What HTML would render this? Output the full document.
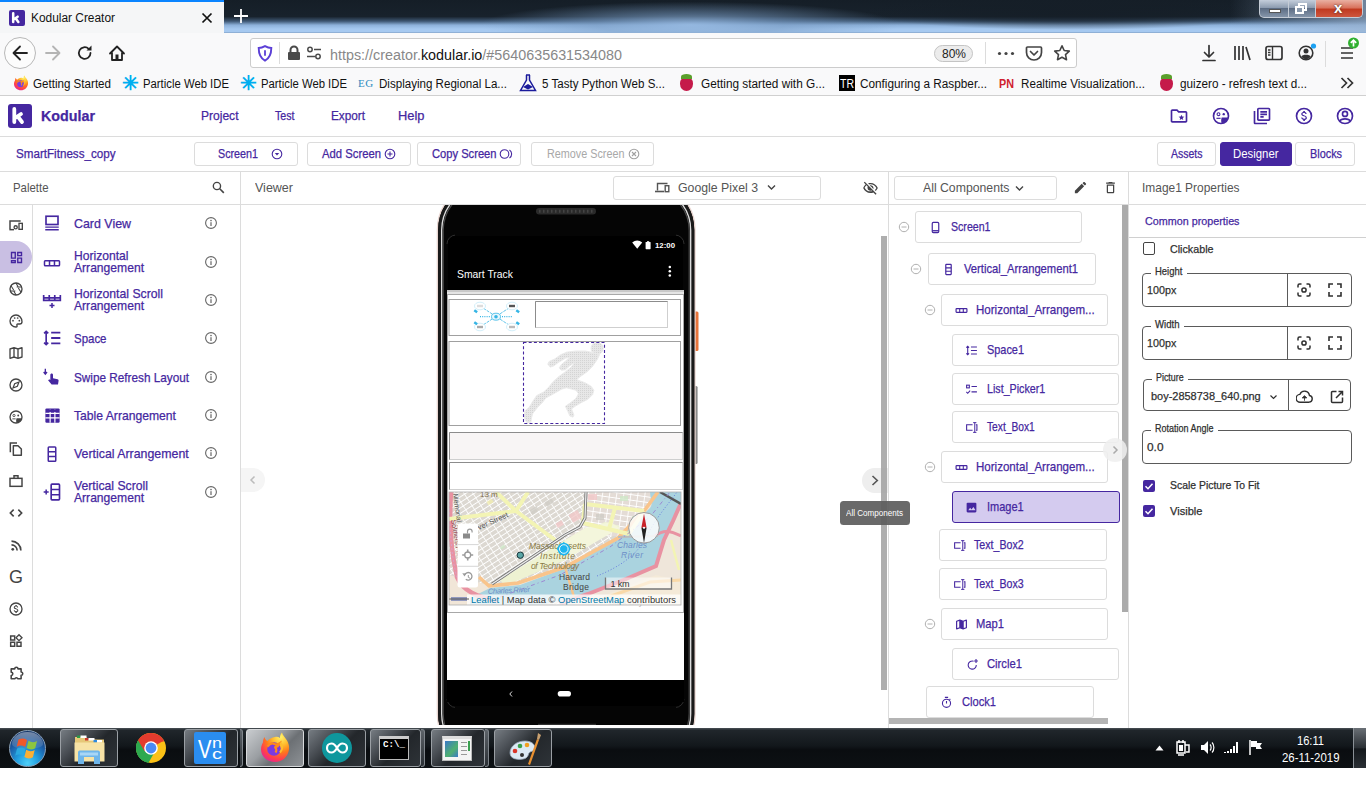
<!DOCTYPE html>
<html><head><meta charset="utf-8"><title>Kodular Creator</title>
<style>
*{box-sizing:border-box;margin:0;padding:0}
html,body{width:1366px;height:802px;overflow:hidden;background:#fff;font-family:"Liberation Sans",sans-serif;}
.abs{position:absolute}
#root{position:relative;width:1366px;height:802px;overflow:hidden;background:#fff}
.t{position:absolute;white-space:nowrap;line-height:1;transform-origin:0 50%}
.btn{position:absolute;border:1px solid #dcdcdc;border-radius:3px;background:#fff;height:24px;top:142px}
.vl{position:absolute;width:1px;background:#dcdcdc}
.hl{position:absolute;height:1px;background:#dcdcdc}
.comp{position:absolute;height:33px;border:1px solid #dcdcdc;border-radius:3px;background:#fff}
</style></head><body><div id="root">
<!-- s_chrome -->
<div class="abs" style="left:0px;top:0px;width:1366px;height:33px;background:linear-gradient(#151e27 0,#18222c 50%,#3d5672 64%,#8db1da 76%,#a6c9f0 88%,#a6c9f0 100%);"></div>
<div class="abs" style="left:480px;top:0px;width:420px;height:33px;background:radial-gradient(ellipse 50% 70% at 50% 75%,rgba(150,185,225,.85) 0,rgba(120,155,195,.55) 45%,rgba(100,135,175,0) 100%);"></div>
<div class="abs" style="left:860px;top:0px;width:420px;height:30px;background:radial-gradient(ellipse 50% 60% at 50% 40%,rgba(21,30,39,.9) 0,rgba(21,30,39,.6) 50%,rgba(21,30,39,0) 100%);"></div>
<div class="abs" style="left:1230px;top:0px;width:136px;height:33px;background:linear-gradient(90deg,rgba(150,175,205,0),rgba(150,175,205,.7));"></div>
<div class="abs" style="left:0px;top:32px;width:1366px;height:1px;background:#8fb0d6;"></div>
<div class="abs" style="left:0px;top:0px;width:224px;height:33px;background:#f5f6f7;border-top:2px solid #0a84ff"></div>
<div class="abs" style="left:9px;top:10px;width:16px;height:16px;background:#4527a0;border-radius:2px"></div>
<svg class="abs" style="left:9px;top:10px" width="16" height="16" viewBox="0 0 24 24"><path d="M6.300 5v13M6.800 14.300L13 10M9.800 12.500L14 18" fill="none" stroke="#fff" stroke-width="3.800" stroke-linecap="round"/></svg>
<div class="t " id="t0" style="left:31px;top:12px;font-size:12.5px;color:#111;transform:scaleX(0.9518)">Kodular Creator</div>
<svg class="abs" style="left:201px;top:12px" width="12" height="12" viewBox="0 0 12 12"><path d="M1.500 1.500l9 9M10.500 1.500l-9 9" stroke="#111" stroke-width="1.700" fill="none"/></svg>
<svg class="abs" style="left:234px;top:9px" width="14" height="14" viewBox="0 0 14 14"><path d="M7 0v14M0 7h14" stroke="#fff" stroke-width="1.800" fill="none"/></svg>
<div class="abs" style="left:1259px;top:0;width:104px;height:18px;border:1px solid #c5ccd6;border-top:none;border-radius:0 0 5px 5px;background:linear-gradient(#c4cedb,#8d9cb0 45%,#5d6d84 50%,#8595aa);overflow:hidden">
 <div class="abs" style="left:55px;top:0;width:48px;height:18px;background:linear-gradient(#e9b0a2,#d8705a 45%,#c0391f 50%,#cf5a42)"></div>
 <div class="abs" style="left:28px;top:0;width:1px;height:18px;background:#c5ccd6"></div>
 <div class="abs" style="left:55px;top:0;width:1px;height:18px;background:#c5ccd6"></div>
 <div class="abs" style="left:9px;top:9px;width:12px;height:4px;background:#fff;border:1px solid #555"></div>
 <div class="abs" style="left:38px;top:3px;width:9px;height:8px;border:2px solid #fff"></div>
 <div class="abs" style="left:35px;top:6px;width:9px;height:8px;border:2px solid #fff;background:#8898ac"></div>
</div>
<div class="t " id="t1" style="left:1334px;top:0px;font-size:15px;color:#fff;font-weight:bold;text-shadow:0 0 2px #222;">x</div>
<div class="abs" style="left:0px;top:33px;width:1366px;height:39px;background:#f9f9fa;"></div>
<div class="abs" style="left:4px;top:37px;width:32px;height:32px;background:#fcfcfc;border:1px solid #b8b8b8;border-radius:50%"></div>
<svg class="abs" style="left:11px;top:44px" width="18" height="18" viewBox="0 0 18 18"><path d="M16 9H3M9 2.500L2.500 9L9 15.500" stroke="#222" stroke-width="1.800" fill="none" stroke-linecap="round" stroke-linejoin="round"/></svg>
<svg class="abs" style="left:44px;top:44px" width="18" height="18" viewBox="0 0 18 18"><path d="M2 9h13M9 2.500L15.500 9L9 15.500" stroke="#b4b4b4" stroke-width="1.800" fill="none" stroke-linecap="round" stroke-linejoin="round"/></svg>
<svg class="abs" style="left:76px;top:44px" width="18" height="18" viewBox="0 0 18 18"><path d="M14.500 9a5.800 5.800 0 1 1-1.800-4.200" stroke="#222" stroke-width="1.800" fill="none" stroke-linecap="round"/><path d="M15.500 1.500v5h-5z" fill="#222"/></svg>
<svg class="abs" style="left:108px;top:44px" width="18" height="18" viewBox="0 0 18 18"><path d="M2 9.500L9 2.500l7 7M4 8.500V16h10V8.500" stroke="#222" stroke-width="1.800" fill="none" stroke-linejoin="round" stroke-linecap="round"/><rect x="7.500" y="10.500" width="3" height="5" fill="#222"/></svg>
<div class="abs" style="left:250px;top:38px;width:827px;height:30px;background:#fff;border:1px solid #ccc;border-radius:3px"></div>
<svg class="abs" style="left:257px;top:45px" width="16" height="17" viewBox="0 0 16 17"><path d="M8 1.200C5.500 2.600 3.500 3 1.700 3c0 6 1.800 10.200 6.300 12.600C12.500 13.200 14.300 9 14.300 3 12.500 3 10.500 2.600 8 1.200z" fill="none" stroke="#5b3fd6" stroke-width="1.900"/><rect x="7.100" y="5" width="1.800" height="6" rx=".9" fill="#5b3fd6"/></svg>
<div class="abs" style="left:279px;top:42px;width:1px;height:22px;background:#dcdcdc;"></div>
<svg class="abs" style="left:287px;top:45px" width="14" height="16" viewBox="0 0 14 16"><path d="M3.500 8V5a3.500 3.500 0 0 1 7 0v3" stroke="#4a4a4a" stroke-width="2" fill="none"/><rect x="1" y="7" width="12" height="8" rx="1" fill="#4a4a4a"/></svg>
<svg class="abs" style="left:306px;top:46px" width="16" height="14" viewBox="0 0 16 14"><circle cx="4" cy="3.500" r="2.200" fill="none" stroke="#4a4a4a" stroke-width="1.500"/><path d="M8 3.500h7M1 10.500h8" stroke="#4a4a4a" stroke-width="1.600"/><circle cx="12" cy="10.500" r="2.200" fill="none" stroke="#4a4a4a" stroke-width="1.500"/></svg>
<div class="t " id="t2" style="left:330px;top:47.5px;font-size:14px;color:#888;transform:scaleX(1.0248)">https://creator.<span style="color:#111">kodular.io</span>/#5640635631534080</div>
<div class="abs" style="left:934px;top:45px;width:39px;height:17px;background:#ececec;border:1px solid #c4c4c4;border-radius:9px"></div>
<div class="t " id="t3" style="left:942px;top:48px;font-size:12px;color:#222;transform:scaleX(0.9987)">80%</div>
<div class="abs" style="left:985px;top:42px;width:1px;height:22px;background:#dcdcdc;"></div>
<svg class="abs" style="left:997px;top:51px" width="18" height="5" viewBox="0 0 18 5"><circle cx="2.500" cy="2.500" r="1.600" fill="#444"/><circle cx="9" cy="2.500" r="1.600" fill="#444"/><circle cx="15.500" cy="2.500" r="1.600" fill="#444"/></svg>
<svg class="abs" style="left:1025px;top:45px" width="18" height="16" viewBox="0 0 18 16"><path d="M2.500 2h13a1 1 0 0 1 1 1v4.500a7.500 7.500 0 0 1-15 0V3a1 1 0 0 1 1-1z" fill="none" stroke="#444" stroke-width="1.700"/><path d="M5.500 6.500L9 10l3.500-3.500" fill="none" stroke="#444" stroke-width="1.700" stroke-linecap="round" stroke-linejoin="round"/></svg>
<svg class="abs" style="left:1053px;top:44px" width="18" height="18" viewBox="0 0 18 18"><path d="M9 1.800l2.200 4.700 5.100.6-3.800 3.500 1 5.100L9 13.200l-4.500 2.500 1-5.100L1.700 7.100l5.100-.6z" fill="none" stroke="#444" stroke-width="1.600" stroke-linejoin="round"/></svg>
<svg class="abs" style="left:1201px;top:44px" width="16" height="18" viewBox="0 0 16 18"><path d="M8 1.500v11M3.500 8.500L8 13l4.500-4.500M2 16.500h12" stroke="#333" stroke-width="1.700" fill="none" stroke-linecap="round" stroke-linejoin="round"/></svg>
<svg class="abs" style="left:1233px;top:45px" width="18" height="16" viewBox="0 0 18 16"><path d="M2 1v14M6 1v14M10 1v14M13 2l4 13" stroke="#333" stroke-width="1.700" fill="none"/></svg>
<svg class="abs" style="left:1265px;top:45px" width="18" height="16" viewBox="0 0 18 16"><rect x="1" y="1.500" width="16" height="13" rx="2" fill="none" stroke="#333" stroke-width="1.700"/><path d="M7.500 2v12M3 5h2.500M3 7.500h2.500M3 10h2.500" stroke="#333" stroke-width="1.400"/></svg>
<svg class="abs" style="left:1297px;top:42px" width="22" height="20" viewBox="0 0 22 20"><circle cx="9" cy="11" r="6.800" fill="none" stroke="#333" stroke-width="1.600"/><circle cx="9" cy="9" r="2.500" fill="#333"/><path d="M4.300 14.500c1-2.200 8.400-2.200 9.400 0a5.500 5.500 0 0 1-9.400 0z" fill="#333"/><circle cx="16.500" cy="4" r="2.600" fill="#1da1f2"/></svg>
<div class="abs" style="left:1325px;top:41px;width:1px;height:26px;background:#dcdcdc;"></div>
<svg class="abs" style="left:1336px;top:36px" width="26" height="26" viewBox="0 0 26 26"><path d="M5 12h12M5 17h12M5 22h12" stroke="#333" stroke-width="1.700"/><circle cx="17.500" cy="7" r="5.500" fill="#30b030"/><path d="M17.500 10.500V4.500M14.800 6.800L17.500 4.100l2.700 2.700" stroke="#fff" stroke-width="1.700" fill="none"/></svg>
<div class="abs" style="left:0px;top:72px;width:1366px;height:24px;background:#f9f9fa;border-bottom:1px solid #d0d0d0"></div>
<svg class="abs" style="left:13px;top:75px" width="16" height="16" viewBox="0 0 32 30"><defs><radialGradient id="ffgb" cx="70%" cy="15%" r="95%"><stop offset="0" stop-color="#fff36a"/><stop offset=".3" stop-color="#ffbd2e"/><stop offset=".55" stop-color="#ff7a1a"/><stop offset=".8" stop-color="#ff3d4f"/><stop offset="1" stop-color="#e0249a"/></radialGradient></defs><path d="M16 4.500c2-.5 3.500 0 5 1C21 3.500 21.500 1.500 23 0c.5 3 3 4.500 5 8 1.500 2.500 2.500 5.500 2 9-1 7-6.500 12.500-14 12.500S2 24 2 17c0-3 1-5.500 2-7 0-2 .5-4 1.500-5.500C6 6.500 7 8 8.500 8.500 10 6.500 13 5 16 4.500z" fill="url(#ffgb)"/><circle cx="15" cy="16.500" r="6.800" fill="#7a3be0"/><path d="M8.500 14c2-2.500 5-3.500 7-2.500 2 .8 3.500.5 5-.5-1 2.500-3 3.500-5 3.500 2 1 2.500 3.500 1 5.500" fill="none" stroke="#ff8a1a" stroke-width="2.200"/><path d="M21.500 10c2 3 2 7-.5 10" fill="none" stroke="#ffbd2e" stroke-width="2"/></svg>
<div class="t " id="t4" style="left:33px;top:78px;font-size:12.5px;color:#111;transform:scaleX(0.9277)">Getting Started</div>
<div class="t " id="t5" style="left:122px;top:73px;font-size:20px;color:#00aeef;font-weight:bold;">✳</div>
<div class="t " id="t6" style="left:143px;top:78px;font-size:12.5px;color:#111;transform:scaleX(0.9057)">Particle Web IDE</div>
<div class="t " id="t7" style="left:240px;top:73px;font-size:20px;color:#00aeef;font-weight:bold;">✳</div>
<div class="t " id="t8" style="left:261px;top:78px;font-size:12.5px;color:#111;transform:scaleX(0.9057)">Particle Web IDE</div>
<div class="t " id="t9" style="left:358px;top:78px;font-size:11px;color:#2e8bc0;font-family:'Liberation Serif',serif;letter-spacing:.5px;">EG</div>
<div class="t " id="t10" style="left:379px;top:78px;font-size:12.5px;color:#111;transform:scaleX(0.9256)">Displaying Regional La...</div>
<svg class="abs" style="left:519px;top:74px" width="18" height="18" viewBox="0 0 18 18"><path d="M7 1h4M7.500 1v5L1.500 16.500h15L10.500 6V1" fill="none" stroke="#1b1b9c" stroke-width="1.500"/><path d="M4 13l5-3 5 3-5 2.500z" fill="#1b1b9c"/></svg>
<div class="t " id="t11" style="left:542px;top:78px;font-size:12.5px;color:#111;transform:scaleX(0.9251)">5 Tasty Python Web S...</div>
<div class="abs" style="left:680px;top:77px;width:13px;height:14px;background:#c51a4a;border-radius:45% 45% 50% 50%"></div>
<div class="abs" style="left:681px;top:74px;width:11px;height:5px;background:#5aa02c;border-radius:50% 50% 0 0"></div>
<div class="t " id="t12" style="left:701px;top:78px;font-size:12.5px;color:#111;transform:scaleX(0.9443)">Getting started with G...</div>
<div class="abs" style="left:839px;top:75px;width:16px;height:16px;background:#000;"></div>
<div class="t " id="t13" style="left:840px;top:78px;font-size:12px;color:#fff;transform:scaleX(0.8750)">TR</div>
<div class="t " id="t14" style="left:860px;top:78px;font-size:12.5px;color:#111;transform:scaleX(0.9420)">Configuring a Raspber...</div>
<div class="t " id="t15" style="left:999px;top:78px;font-size:12px;color:#d0202e;font-weight:bold;transform:scaleX(0.8997)">PN</div>
<div class="t " id="t16" style="left:1021px;top:78px;font-size:12.5px;color:#111;transform:scaleX(0.9311)">Realtime Visualization...</div>
<div class="abs" style="left:1160px;top:77px;width:13px;height:14px;background:#c51a4a;border-radius:45% 45% 50% 50%"></div>
<div class="abs" style="left:1161px;top:74px;width:11px;height:5px;background:#5aa02c;border-radius:50% 50% 0 0"></div>
<div class="t " id="t17" style="left:1180px;top:78px;font-size:12.5px;color:#111;transform:scaleX(0.9374)">guizero - refresh text d...</div>
<svg class="abs" style="left:1340px;top:77px" width="14" height="12" viewBox="0 0 14 12"><path d="M1.500 1l5 5-5 5M7.500 1l5 5-5 5" fill="none" stroke="#333" stroke-width="1.700"/></svg>
<!-- s_app -->
<div class="abs" style="left:0px;top:96px;width:1366px;height:41px;background:#fff;border-bottom:1px solid #dcdcdc"></div>
<div class="abs" style="left:8px;top:104px;width:24px;height:24px;background:#4527a0;border-radius:3px"></div>
<svg class="abs" style="left:8px;top:104px" width="24" height="24" viewBox="0 0 24 24"><path d="M6.300 5v13M6.800 14.300L13 10M9.800 12.500L14 18" fill="none" stroke="#fff" stroke-width="3.800" stroke-linecap="round"/></svg>
<div class="t " id="t18" style="left:40.7px;top:108px;font-size:15px;color:#4527a0;font-weight:bold;-webkit-text-stroke:.25px;transform:scaleX(0.9529)">Kodular</div>
<div class="t " id="t19" style="left:201px;top:109px;font-size:13px;color:#4527a0;-webkit-text-stroke:.25px;transform:scaleX(0.9266)">Project</div>
<div class="t " id="t20" style="left:275px;top:109px;font-size:13px;color:#4527a0;-webkit-text-stroke:.25px;transform:scaleX(0.8178)">Test</div>
<div class="t " id="t21" style="left:331px;top:109px;font-size:13px;color:#4527a0;-webkit-text-stroke:.25px;transform:scaleX(0.9048)">Export</div>
<div class="t " id="t22" style="left:398px;top:109px;font-size:13px;color:#4527a0;-webkit-text-stroke:.25px;transform:scaleX(0.9907)">Help</div>
<svg class="abs" style="left:1169px;top:105.5px" width="20" height="20" viewBox="0 0 24 24"><path d="M20 6h-8l-2-2H4c-1.100 0-2 .9-2 2v12c0 1.100.9 2 2 2h16c1.100 0 2-.9 2-2V8c0-1.100-.9-2-2-2zm0 12H4V6h5.200l2 2H20v10zm-7.100-1.100l2.100-1.300 2.100 1.300-.6-2.400 1.900-1.600-2.500-.2-.9-2.300-1 2.300-2.500.2 1.900 1.600z" fill="#4527a0"/></svg>
<svg class="abs" style="left:1210.7px;top:105.5px" width="20" height="20" viewBox="0 0 24 24"><circle cx="12" cy="12" r="9" fill="none" stroke="#4527a0" stroke-width="2"/><circle cx="9" cy="9.800" r="1.700" fill="none" stroke="#4527a0" stroke-width="1.300"/><circle cx="15.300" cy="9.800" r="1.400" fill="#4527a0"/><path d="M6.500 14.800h5" stroke="#4527a0" stroke-width="1.400"/><path d="M12.800 13.800h7.800c-.6 3.800-3.500 6.600-7.800 7.200-.8-2.500-.8-5 0-7.200z" fill="#4527a0"/></svg>
<svg class="abs" style="left:1252px;top:105.5px" width="20" height="20" viewBox="0 0 24 24"><path d="M4 6H2v14c0 1.100.9 2 2 2h14v-2H4V6zm16-4H8c-1.100 0-2 .9-2 2v12c0 1.100.9 2 2 2h12c1.100 0 2-.9 2-2V4c0-1.100-.9-2-2-2zm0 14H8V4h12v12zM10 9h8v2h-8zm0 3h4v2h-4zm0-6h8v2h-8z" fill="#4527a0"/></svg>
<svg class="abs" style="left:1293.6px;top:105.5px" width="20" height="20" viewBox="0 0 24 24"><circle cx="12" cy="12" r="9" fill="none" stroke="#4527a0" stroke-width="2"/><path d="M12.300 11c-1.700-.4-2.100-.9-2.100-1.500 0-.7.700-1.200 1.800-1.200 1.200 0 1.600.6 1.700 1.400h1.500c0-1.100-.7-2.200-2.100-2.500V6h-2v1.200c-1.300.3-2.400 1.100-2.400 2.400 0 1.600 1.300 2.300 3.200 2.800 1.700.4 2 1 2 1.600 0 .5-.3 1.200-1.800 1.200-1.400 0-1.900-.6-2-1.400H8.600c.1 1.500 1.200 2.300 2.500 2.600V18h2v-1.200c1.300-.2 2.400-1 2.400-2.400 0-1.900-1.600-2.600-3.200-3z" fill="#4527a0"/></svg>
<svg class="abs" style="left:1335px;top:105.5px" width="20" height="20" viewBox="0 0 24 24"><circle cx="12" cy="12" r="9" fill="none" stroke="#4527a0" stroke-width="2"/><circle cx="12" cy="9.500" r="3" fill="none" stroke="#4527a0" stroke-width="2"/><path d="M5.800 18c1.500-3.500 10.900-3.500 12.400 0" fill="none" stroke="#4527a0" stroke-width="2"/></svg>
<div class="abs" style="left:0px;top:137px;width:1366px;height:35px;background:#fff;border-bottom:1px solid #dcdcdc"></div>
<div class="t " id="t23" style="left:15.5px;top:147.7px;font-size:12px;color:#4527a0;-webkit-text-stroke:.25px;transform:scaleX(0.9688)">SmartFitness_copy</div>
<div class="btn" style="left:194px;width:104px"></div>
<div class="t " id="t24" style="left:218px;top:147.7px;font-size:12px;color:#4527a0;-webkit-text-stroke:.25px;transform:scaleX(0.8948)">Screen1</div>
<svg class="abs" style="left:271px;top:148px" width="12" height="12" viewBox="0 0 12 12"><circle cx="6" cy="6" r="4.800" fill="none" stroke="#4527a0" stroke-width="1.100"/><path d="M3.800 5l2.200 2.400L8.200 5z" fill="#4527a0"/></svg>
<div class="btn" style="left:307px;width:104px"></div>
<div class="t " id="t25" style="left:321.5px;top:147.7px;font-size:12px;color:#4527a0;-webkit-text-stroke:.25px;transform:scaleX(0.9407)">Add Screen</div>
<svg class="abs" style="left:384px;top:148px" width="12" height="12" viewBox="0 0 12 12"><circle cx="6" cy="6" r="4.800" fill="none" stroke="#4527a0" stroke-width="1.100"/><path d="M6 3.500v5M3.500 6h5" stroke="#4527a0" stroke-width="1.100"/></svg>
<div class="btn" style="left:417px;width:104px"></div>
<div class="t " id="t26" style="left:431.5px;top:147.7px;font-size:12px;color:#4527a0;-webkit-text-stroke:.25px;transform:scaleX(0.9297)">Copy Screen</div>
<svg class="abs" style="left:499px;top:148px" width="14" height="12" viewBox="0 0 14 12"><circle cx="5.500" cy="6" r="4.300" fill="none" stroke="#4527a0" stroke-width="1.100"/><path d="M10.500 2a4.800 4.800 0 0 1 0 8" fill="none" stroke="#4527a0" stroke-width="1.100"/></svg>
<div class="btn" style="left:531px;width:123px"></div>
<div class="t " id="t27" style="left:546.5px;top:147.7px;font-size:12px;color:#a8a8a8;transform:scaleX(0.9007)">Remove Screen</div>
<svg class="abs" style="left:628px;top:148px" width="12" height="12" viewBox="0 0 12 12"><circle cx="6" cy="6" r="4.800" fill="none" stroke="#a0a0a0" stroke-width="1.100"/><path d="M4 4l4 4M8 4l-4 4" stroke="#a0a0a0" stroke-width="1.100"/></svg>
<div class="btn" style="left:1157px;width:59px"></div>
<div class="t " id="t28" style="left:1171px;top:148px;font-size:12px;color:#4527a0;-webkit-text-stroke:.25px;transform:scaleX(0.8746)">Assets</div>
<div class="btn" style="left:1220px;width:72px;background:#4527a0;border-color:#4527a0"></div>
<div class="t " id="t29" style="left:1233px;top:148px;font-size:12px;color:#fff;transform:scaleX(0.9473)">Designer</div>
<div class="btn" style="left:1295px;width:60px"></div>
<div class="t " id="t30" style="left:1309.5px;top:148px;font-size:12px;color:#4527a0;-webkit-text-stroke:.25px;transform:scaleX(0.9054)">Blocks</div>
<div class="hl" style="left:0;top:204px;width:1366px"></div>
<div class="vl" style="left:240px;top:172px;height:556px"></div>
<div class="vl" style="left:888px;top:172px;height:556px"></div>
<div class="vl" style="left:1128px;top:172px;height:556px"></div>
<div class="vl" style="left:32px;top:205px;height:523px"></div>
<div class="t " id="t31" style="left:13px;top:181px;font-size:13px;color:#555;transform:scaleX(0.8769)">Palette</div>
<svg class="abs" style="left:211px;top:180px" width="15" height="15" viewBox="0 0 24 24"><circle cx="9.500" cy="9.500" r="5.800" fill="none" stroke="#444" stroke-width="2.200"/><path d="M14 14l6.500 6.500" stroke="#444" stroke-width="2.600"/></svg>
<div class="t " id="t32" style="left:254.5px;top:181px;font-size:13px;color:#555;transform:scaleX(0.9616)">Viewer</div>
<div class="abs" style="left:613px;top:176px;width:208px;height:24px;border:1px solid #dcdcdc;border-radius:3px"></div>
<svg class="abs" style="left:655px;top:181px" width="15" height="13" viewBox="0 0 15 13"><path d="M2.500 9.500V2.500h10" fill="none" stroke="#555" stroke-width="1.400"/><path d="M0 10.500h9" stroke="#555" stroke-width="1.600"/><rect x="10.200" y="4.700" width="3.600" height="6" fill="none" stroke="#555" stroke-width="1.400"/></svg>
<div class="t " id="t33" style="left:677.5px;top:181px;font-size:13.5px;color:#555;transform:scaleX(0.9110)">Google Pixel 3</div>
<svg class="abs" style="left:767px;top:184px" width="9" height="7" viewBox="0 0 9 7"><path d="M1 1.500l3.500 3.500L8 1.500" fill="none" stroke="#444" stroke-width="1.400"/></svg>
<svg class="abs" style="left:862px;top:180px" width="17" height="16" viewBox="0 0 24 24"><path d="M12 6.500c3.800 0 7.200 2.100 8.800 5.500-.6 1.200-1.400 2.300-2.400 3.100l1.400 1.400c1.400-1.200 2.500-2.800 3.200-4.500-1.700-4.400-6-7.500-11-7.500-1.300 0-2.500.2-3.600.6l1.600 1.600c.7-.1 1.300-.2 2-.2zm-1.100 1.600l2.100 2.100c.6.300 1 .7 1.300 1.300l2.100 2.100c.1-.3.100-.7.100-1.100 0-2.500-2-4.500-4.500-4.500-.4 0-.7 0-1.100.1zM2 3.900l2.700 2.700C3.100 7.900 1.800 9.800 1 12c1.700 4.400 6 7.500 11 7.500 1.500 0 3-.3 4.300-.8l3.400 3.400 1.400-1.400L3.400 2.500 2 3.900zm4.100 4.100l1.700 1.700c-.2.600-.3 1.100-.3 1.800 0 2.500 2 4.500 4.500 4.500.6 0 1.200-.1 1.800-.4l1 1c-.9.200-1.800.4-2.800.4-3.800 0-7.200-2.100-8.800-5.500.7-1.400 1.700-2.600 2.900-3.500z" fill="#444"/></svg>
<div class="abs" style="left:894px;top:176px;width:163px;height:24px;border:1px solid #dcdcdc;border-radius:3px"></div>
<div class="t " id="t34" style="left:922.5px;top:181px;font-size:13.5px;color:#555;transform:scaleX(0.9075)">All Components</div>
<svg class="abs" style="left:1015px;top:185px" width="9" height="7" viewBox="0 0 9 7"><path d="M1 1.500l3.500 3.500L8 1.500" fill="none" stroke="#444" stroke-width="1.400"/></svg>
<svg class="abs" style="left:1073px;top:180px" width="15" height="15" viewBox="0 0 24 24"><path d="M3 17.200V21h3.800L17.800 9.900l-3.800-3.800L3 17.200zM20.700 7c.4-.4.400-1 0-1.400l-2.300-2.300c-.4-.4-1-.4-1.400 0l-1.800 1.800 3.800 3.800L20.700 7z" fill="#444"/></svg>
<svg class="abs" style="left:1103px;top:180px" width="15" height="15" viewBox="0 0 24 24"><path d="M6 19c0 1.100.9 2 2 2h8c1.100 0 2-.9 2-2V7H6v12zM8 9h8v10H8V9zm7.500-5l-1-1h-5l-1 1H5v2h14V4h-3.500z" fill="#444"/></svg>
<div class="t " id="t35" style="left:1141.5px;top:181px;font-size:13px;color:#555;transform:scaleX(0.9178)">Image1 Properties</div>
<!-- s_palette -->
<div class="abs" style="left:0px;top:241px;width:32px;height:32px;background:#c9bfe3;border-radius:0 16px 16px 0"></div>
<svg class="abs" style="left:8.0px;top:217.0px" width="16" height="16" viewBox="0 0 24 24"><path d="M3 18V6h16" fill="none" stroke="#444" stroke-width="2.200"/><rect x="16.500" y="9.500" width="5" height="9" fill="none" stroke="#444" stroke-width="2"/><circle cx="11.500" cy="15.500" r="2.400" fill="none" stroke="#444" stroke-width="2"/><path d="M2 19h7" stroke="#444" stroke-width="2.200"/></svg>
<svg class="abs" style="left:8.5px;top:249.5px" width="15" height="15" viewBox="0 0 24 24"><path d="M4 4h6v9H4zM14 4h6v5h-6zM4 17h6v3H4zM14 13h6v7h-6z" fill="none" stroke="#4527a0" stroke-width="2.200"/></svg>
<svg class="abs" style="left:8.0px;top:281.0px" width="16" height="16" viewBox="0 0 24 24"><circle cx="12" cy="12" r="9" fill="none" stroke="#444" stroke-width="2"/><path d="M12 3l3.500 6.500M20.500 9H13M19.500 17l-4-6.500M12 21l-3.500-6.500M3.500 15H11M4.500 7l4 6.500" stroke="#444" stroke-width="1.600" fill="none"/></svg>
<svg class="abs" style="left:8.0px;top:313.0px" width="16" height="16" viewBox="0 0 24 24"><path d="M12 3a9 9 0 1 0 0 18c1.500 0 2-1 1.500-2s-.3-2.500 1.500-2.500h2.500A3.500 3.500 0 0 0 21 13c0-5.500-4-10-9-10z" fill="none" stroke="#444" stroke-width="2"/><circle cx="7.500" cy="11.500" r="1.300" fill="#444"/><circle cx="10" cy="7.500" r="1.300" fill="#444"/><circle cx="14.500" cy="7.500" r="1.300" fill="#444"/><circle cx="17" cy="11.500" r="1.300" fill="#444"/></svg>
<svg class="abs" style="left:8.0px;top:345.0px" width="16" height="16" viewBox="0 0 24 24"><path d="M3 6l6-2 6 2 6-2v14l-6 2-6-2-6 2zM9 4v14M15 6v14" fill="none" stroke="#444" stroke-width="2" stroke-linejoin="round"/></svg>
<svg class="abs" style="left:8.0px;top:377.0px" width="16" height="16" viewBox="0 0 24 24"><circle cx="12" cy="12" r="9" fill="none" stroke="#444" stroke-width="2"/><path d="M16.500 7.500l-2.500 6.500-6.500 2.500 2.500-6.500z" fill="none" stroke="#444" stroke-width="1.800"/></svg>
<svg class="abs" style="left:8.0px;top:409.0px" width="16" height="16" viewBox="0 0 24 24"><circle cx="12" cy="12" r="9" fill="none" stroke="#444" stroke-width="2"/><circle cx="9" cy="9.800" r="1.700" fill="none" stroke="#444" stroke-width="1.300"/><circle cx="15.300" cy="9.800" r="1.400" fill="#444"/><path d="M6.500 14.800h5" stroke="#444" stroke-width="1.400"/><path d="M12.800 13.800h7.800c-.6 3.800-3.500 6.600-7.800 7.200-.8-2.500-.8-5 0-7.200z" fill="#444"/></svg>
<svg class="abs" style="left:8.0px;top:441.0px" width="16" height="16" viewBox="0 0 24 24"><path d="M7 6V2.500h-3.500v15" fill="none" stroke="#444" stroke-width="0"/><path d="M3.500 17V3h10" fill="none" stroke="#444" stroke-width="2.200"/><path d="M8 7h7l5 5v9.500H8z" fill="none" stroke="#444" stroke-width="2.200" stroke-linejoin="round"/></svg>
<svg class="abs" style="left:8.0px;top:473.0px" width="16" height="16" viewBox="0 0 24 24"><rect x="3" y="8" width="18" height="12" fill="none" stroke="#444" stroke-width="2.200"/><path d="M9 8V4h6v4" fill="none" stroke="#444" stroke-width="2.200"/></svg>
<svg class="abs" style="left:8.0px;top:505.0px" width="16" height="16" viewBox="0 0 24 24"><path d="M8.500 7L3.500 12l5 5M15.500 7l5 5-5 5" fill="none" stroke="#444" stroke-width="2.400"/></svg>
<svg class="abs" style="left:8.5px;top:537.5px" width="15" height="15" viewBox="0 0 24 24"><circle cx="6" cy="18" r="2.200" fill="#444"/><path d="M4 11a9 9 0 0 1 9 9M4 5a15 15 0 0 1 15 15" fill="none" stroke="#444" stroke-width="2.600"/></svg>
<svg class="abs" style="left:8.0px;top:601.0px" width="16" height="16" viewBox="0 0 24 24"><circle cx="12" cy="12" r="9" fill="none" stroke="#444" stroke-width="2"/><path d="M12.300 11c-1.700-.4-2.100-.9-2.100-1.500 0-.7.700-1.200 1.800-1.200 1.200 0 1.600.6 1.700 1.400h1.500c0-1.100-.7-2.200-2.100-2.500V6h-2v1.200c-1.300.3-2.400 1.100-2.400 2.400 0 1.600 1.300 2.300 3.200 2.800 1.700.4 2 1 2 1.600 0 .5-.3 1.200-1.800 1.200-1.400 0-1.900-.6-2-1.400H8.600c.1 1.500 1.200 2.300 2.500 2.600V18h2v-1.200c1.300-.2 2.400-1 2.400-2.400 0-1.900-1.600-2.600-3.200-3z" fill="#444"/></svg>
<svg class="abs" style="left:8.0px;top:633.0px" width="16" height="16" viewBox="0 0 24 24"><path d="M4 4.500h6v6H4zM4 14h6v6H4zM13.500 14h6v6h-6z" fill="none" stroke="#444" stroke-width="2.200"/><path d="M16.500 2.500l4.500 4.500-4.500 4.500L12 7z" fill="none" stroke="#444" stroke-width="2"/></svg>
<svg class="abs" style="left:7.5px;top:664.5px" width="17" height="17" viewBox="0 0 24 24"><path d="M9.500 5.500a2.300 2.300 0 0 1 4.600 0H18.500v4.400a2.300 2.300 0 0 1 0 4.600v5H14a2.300 2.300 0 0 0-4.400 0H4.500v-4.800a2.300 2.300 0 0 0 0-4.600V5.500z" fill="none" stroke="#444" stroke-width="2.200" stroke-linejoin="round"/></svg>
<div class="t " id="t36" style="left:9px;top:568px;font-size:18px;color:#444;transform:scaleX(0.9989)">G</div>
<div class="t " id="t37" style="left:73.5px;top:217px;font-size:13px;color:#4527a0;-webkit-text-stroke:.25px;transform:scaleX(0.9542)">Card View</div>
<svg class="abs" style="left:204px;top:216px" width="14" height="14" viewBox="0 0 14 14"><circle cx="7" cy="7" r="5.400" fill="none" stroke="#666" stroke-width="1.100"/><circle cx="7" cy="4.600" r=".8" fill="#666"/><rect x="6.400" y="6.200" width="1.200" height="3.800" fill="#666"/></svg>
<div class="t " id="t38" style="left:73.5px;top:249px;font-size:13px;color:#4527a0;-webkit-text-stroke:.25px;transform:scaleX(0.9311)">Horizontal</div>
<div class="t " id="t39" style="left:73.5px;top:261px;font-size:13px;color:#4527a0;-webkit-text-stroke:.25px;transform:scaleX(0.9314)">Arrangement</div>
<svg class="abs" style="left:204px;top:255px" width="14" height="14" viewBox="0 0 14 14"><circle cx="7" cy="7" r="5.400" fill="none" stroke="#666" stroke-width="1.100"/><circle cx="7" cy="4.600" r=".8" fill="#666"/><rect x="6.400" y="6.200" width="1.200" height="3.800" fill="#666"/></svg>
<div class="t " id="t40" style="left:73.5px;top:287px;font-size:13px;color:#4527a0;-webkit-text-stroke:.25px;transform:scaleX(0.9402)">Horizontal Scroll</div>
<div class="t " id="t41" style="left:73.5px;top:299px;font-size:13px;color:#4527a0;-webkit-text-stroke:.25px;transform:scaleX(0.9314)">Arrangement</div>
<svg class="abs" style="left:204px;top:293px" width="14" height="14" viewBox="0 0 14 14"><circle cx="7" cy="7" r="5.400" fill="none" stroke="#666" stroke-width="1.100"/><circle cx="7" cy="4.600" r=".8" fill="#666"/><rect x="6.400" y="6.200" width="1.200" height="3.800" fill="#666"/></svg>
<div class="t " id="t42" style="left:73.5px;top:332px;font-size:13px;color:#4527a0;-webkit-text-stroke:.25px;transform:scaleX(0.8814)">Space</div>
<svg class="abs" style="left:204px;top:331px" width="14" height="14" viewBox="0 0 14 14"><circle cx="7" cy="7" r="5.400" fill="none" stroke="#666" stroke-width="1.100"/><circle cx="7" cy="4.600" r=".8" fill="#666"/><rect x="6.400" y="6.200" width="1.200" height="3.800" fill="#666"/></svg>
<div class="t " id="t43" style="left:73.5px;top:371px;font-size:13px;color:#4527a0;-webkit-text-stroke:.25px;transform:scaleX(0.9042)">Swipe Refresh Layout</div>
<svg class="abs" style="left:204px;top:370px" width="14" height="14" viewBox="0 0 14 14"><circle cx="7" cy="7" r="5.400" fill="none" stroke="#666" stroke-width="1.100"/><circle cx="7" cy="4.600" r=".8" fill="#666"/><rect x="6.400" y="6.200" width="1.200" height="3.800" fill="#666"/></svg>
<div class="t " id="t44" style="left:73.5px;top:409px;font-size:13px;color:#4527a0;-webkit-text-stroke:.25px;transform:scaleX(0.9347)">Table Arrangement</div>
<svg class="abs" style="left:204px;top:408px" width="14" height="14" viewBox="0 0 14 14"><circle cx="7" cy="7" r="5.400" fill="none" stroke="#666" stroke-width="1.100"/><circle cx="7" cy="4.600" r=".8" fill="#666"/><rect x="6.400" y="6.200" width="1.200" height="3.800" fill="#666"/></svg>
<div class="t " id="t45" style="left:73.5px;top:447px;font-size:13px;color:#4527a0;-webkit-text-stroke:.25px;transform:scaleX(0.9504)">Vertical Arrangement</div>
<svg class="abs" style="left:204px;top:446px" width="14" height="14" viewBox="0 0 14 14"><circle cx="7" cy="7" r="5.400" fill="none" stroke="#666" stroke-width="1.100"/><circle cx="7" cy="4.600" r=".8" fill="#666"/><rect x="6.400" y="6.200" width="1.200" height="3.800" fill="#666"/></svg>
<div class="t " id="t46" style="left:73.5px;top:479px;font-size:13px;color:#4527a0;-webkit-text-stroke:.25px;transform:scaleX(0.9397)">Vertical Scroll</div>
<div class="t " id="t47" style="left:73.5px;top:491px;font-size:13px;color:#4527a0;-webkit-text-stroke:.25px;transform:scaleX(0.9314)">Arrangement</div>
<svg class="abs" style="left:204px;top:485px" width="14" height="14" viewBox="0 0 14 14"><circle cx="7" cy="7" r="5.400" fill="none" stroke="#666" stroke-width="1.100"/><circle cx="7" cy="4.600" r=".8" fill="#666"/><rect x="6.400" y="6.200" width="1.200" height="3.800" fill="#666"/></svg>
<svg class="abs" style="left:43.0px;top:214.0px" width="18" height="18" viewBox="0 0 24 24"><rect x="4" y="3" width="16" height="11" fill="none" stroke="#4527a0" stroke-width="2.200"/><path d="M3 17.500h18M3 21h18" stroke="#4527a0" stroke-width="1.800"/></svg>
<svg class="abs" style="left:43.0px;top:254.0px" width="18" height="18" viewBox="0 0 24 24"><rect x="2" y="9" width="20" height="6.500" rx="1" fill="none" stroke="#4527a0" stroke-width="2"/><path d="M8.700 9v6.500M15.300 9v6.500" stroke="#4527a0" stroke-width="2"/></svg>
<svg class="abs" style="left:42.0px;top:290.0px" width="20" height="20" viewBox="0 0 24 24"><path d="M2 6v6.500h20V6M8.700 6v6.500M15.300 6v6.500M2 9.500h20" fill="none" stroke="#4527a0" stroke-width="2"/><path d="M12 15.500v6M9 18.500h6" stroke="#4527a0" stroke-width="1.800"/></svg>
<svg class="abs" style="left:42.0px;top:328.0px" width="20" height="20" viewBox="0 0 24 24"><path d="M5 4v16M2.500 6.500L5 4l2.500 2.500M2.500 17.500L5 20l2.500-2.500" fill="none" stroke="#4527a0" stroke-width="2"/><path d="M11 5.500h11M11 12h11M11 18.500h11" stroke="#4527a0" stroke-width="2.200"/></svg>
<svg class="abs" style="left:42.0px;top:367.0px" width="20" height="20" viewBox="0 0 24 24"><path d="M4 2v6M2 6l2 2.500L6 6" fill="none" stroke="#4527a0" stroke-width="1.600"/><path d="M10 9.500c0-1 .7-1.700 1.600-1.700s1.600.7 1.600 1.700v4l5.500 1.200c.8.200 1.300.9 1.200 1.700l-.7 4.600H11.500l-4.200-5.200c1-1 1.900-.8 2.700-.2z" fill="#4527a0"/></svg>
<svg class="abs" style="left:42.5px;top:405.5px" width="19" height="19" viewBox="0 0 24 24"><rect x="3" y="3" width="18" height="18" rx="1.500" fill="#4527a0"/><path d="M3 9.200h18M3 15h18M9 4.500v16.500M15 4.500v16.500" stroke="#fff" stroke-width="1.500"/><rect x="4.500" y="4.500" width="15" height="3" fill="#4527a0"/></svg>
<svg class="abs" style="left:43.0px;top:445.0px" width="18" height="18" viewBox="0 0 24 24"><rect x="7" y="2.500" width="10" height="19" rx="1" fill="none" stroke="#4527a0" stroke-width="2"/><path d="M7 9h10M7 15.300h10" stroke="#4527a0" stroke-width="2"/></svg>
<svg class="abs" style="left:42.0px;top:482.0px" width="20" height="20" viewBox="0 0 24 24"><rect x="11" y="2.500" width="10" height="19" rx="1" fill="none" stroke="#4527a0" stroke-width="2"/><path d="M11 9h10M11 15.300h10" stroke="#4527a0" stroke-width="2"/><path d="M2 12h6M5 9v6" stroke="#4527a0" stroke-width="1.800"/></svg>
<div class="abs" style="left:241px;top:468px;width:24px;height:24px;background:#f5f5f5;border-radius:0 12px 12px 0"></div>
<svg class="abs" style="left:247px;top:474px" width="12" height="12" viewBox="0 0 12 12"><path d="M7.500 2.500L4 6l3.500 3.500" fill="none" stroke="#bbb" stroke-width="1.500"/></svg>
<!-- s_phone -->
<svg class="abs" style="left:430px;top:205px" width="275" height="520" viewBox="430 205 275 520"><defs><clipPath id="mapc"><rect x="449" y="492" width="232" height="113"/></clipPath><pattern id="grid" width="7.500" height="4.600" patternUnits="userSpaceOnUse" patternTransform="rotate(-33)"><rect width="7.500" height="4.600" fill="#dcd8d1"/><path d="M0 0h7.500M0 0v4.600" stroke="#fff" stroke-width="1.700"/></pattern><pattern id="grid2" width="7" height="5.500" patternUnits="userSpaceOnUse" patternTransform="rotate(8)"><rect width="7" height="5.500" fill="#e4dcd6"/><path d="M0 0h7M0 0v5.500" stroke="#fff" stroke-width="1.800"/></pattern><pattern id="dots" width="2" height="2" patternUnits="userSpaceOnUse"><rect width="2" height="2" fill="#e7e7e7"/><rect width="1" height="1" fill="#d4d4d4"/></pattern></defs><rect x="694" y="311.500" width="4.500" height="39.500" rx="1.500" fill="#e8743a"/><rect x="694" y="386" width="3.600" height="78" rx="1.500" fill="#8a8a8a"/><rect x="437.4" y="182" width="257.6" height="580" rx="48" fill="#050505" stroke="#e9d6d1" stroke-width="1.4"/><rect x="439.5" y="184.1" width="253.40000000000003" height="575.8" rx="46" fill="none" stroke="#1a1a1a" stroke-width="2.8"/><rect x="441.7" y="186.3" width="249.00000000000003" height="571.4" rx="44" fill="none" stroke="#dcdcdc" stroke-width="1.4"/><rect x="443.2" y="187.8" width="246.00000000000003" height="568.4" rx="43" fill="none" stroke="#4a4a4a" stroke-width="1.2"/><rect x="536" y="208" width="60" height="6.500" rx="3.200" fill="#2a2a2a"/><path d="M539 211.200h54" stroke="#444" stroke-width="3" stroke-dasharray="1.500 2.500"/><rect x="447" y="235" width="237" height="472.500" rx="9" fill="#000" stroke="#3a3a3a" stroke-width=".8"/><rect x="455" y="234" width="221" height="2" fill="#050505"/><rect x="455" y="706" width="221" height="3" fill="#050505"/><rect x="446" y="244" width="2" height="455" fill="#050505"/><rect x="683" y="244" width="2" height="455" fill="#050505"/><path d="M632.200 242.500c3-2.700 7-2.700 10 0l-5 6.300z" fill="#fff"/><rect x="645.600" y="242" width="5" height="7.200" rx=".6" fill="#fff"/><rect x="647" y="241.200" width="2.200" height="1.200" fill="#fff"/><circle cx="669.800" cy="267" r="1.250" fill="#fff"/><circle cx="669.800" cy="271.200" r="1.250" fill="#fff"/><circle cx="669.800" cy="275.400" r="1.250" fill="#fff"/><rect x="447" y="290" width="237" height="390" fill="#fff"/><rect x="447" y="290" width="237" height="2" fill="#c8c8c8"/><rect x="447" y="292" width="237" height="2" fill="#e4e4e4"/><rect x="447.500" y="294.500" width="236" height="318" fill="none" stroke="#a8a8a8" stroke-width="1"/><rect x="449" y="299.500" width="231.500" height="36" fill="#fff" stroke="#a0a0a0" stroke-width="1"/><g stroke="#35b5e5" stroke-width=".8" fill="none"><path d="M480 306l16 10.500L512 306M480 327l16-10.500L512 327" stroke-dasharray="3 1"/><ellipse cx="496" cy="316.700" rx="4.500" ry="3.500" fill="#e8f7fd"/><path d="M480 316.700h10M502 316.700h10" stroke-dasharray="1 1.200" stroke-width="1.200"/></g><circle cx="496" cy="316.700" r="1.800" fill="#35b5e5"/><ellipse cx="480" cy="306" rx="5.500" ry="3.800" fill="#fff" stroke="#bfe6f6" stroke-width=".7"/><rect x="477" y="304.8" width="6" height="2.400" fill="#ddd"/><ellipse cx="512" cy="306" rx="5.500" ry="3.800" fill="#fff" stroke="#bfe6f6" stroke-width=".7"/><rect x="509" y="304.8" width="6" height="2.400" fill="#555"/><ellipse cx="480" cy="327" rx="5.500" ry="3.800" fill="#fff" stroke="#bfe6f6" stroke-width=".7"/><rect x="477" y="325.8" width="6" height="2.400" fill="#aaa"/><ellipse cx="512" cy="327" rx="5.500" ry="3.800" fill="#fff" stroke="#bfe6f6" stroke-width=".7"/><rect x="509" y="325.8" width="6" height="2.400" fill="#bbb"/><rect x="474" y="310" width="3.500" height="2.500" fill="#35b5e5" transform="rotate(35 475.7 311.2)"/><rect x="516" y="310" width="3.500" height="2.500" fill="#35b5e5" transform="rotate(35 517.7 311.2)"/><rect x="474" y="322" width="3.500" height="2.500" fill="#35b5e5" transform="rotate(35 475.7 323.2)"/><rect x="516" y="322" width="3.500" height="2.500" fill="#35b5e5" transform="rotate(35 517.7 323.2)"/><rect x="535.500" y="301.500" width="132" height="26" fill="#fff" stroke="#cfcfcf" stroke-width="1"/><path d="M535.500 327.500v-26h132" fill="none" stroke="#8c8c8c" stroke-width="1"/><rect x="449" y="341.500" width="231.500" height="84" fill="#fff" stroke="#a0a0a0" stroke-width="1"/><g fill="url(#dots)" stroke="#ebebeb" stroke-width="1" stroke-linejoin="round"><circle cx="597.1" cy="348.3" r="6.100"/><path d="M591.8 352.4L585.3 351.0L576.0 351.0L566.6 352.2L560.7 354.8L554.9 358.9L549.0 361.6L547.8 364.1L550.2 367.1L553.7 365.9L558.4 362.4L565.4 358.3L570.1 357.1L565.4 361.2L561.3 364.7L559.3 367.9L561.3 370.2L565.4 369.8L569.5 365.9L574.2 362.7L571.3 367.1L565.4 371.8L559.0 376.4L553.1 381.7L548.4 387.6L543.7 392.0L536.7 395.6L532.6 401.7L529.1 407.5L525.0 411.0L524.1 416.9L526.7 422.5L530.8 422.5L531.4 418.1L532.8 413.4L537.3 407.7L542.2 402.8L545.7 398.1L553.7 393.7L561.9 389.0L566.6 387.8L571.3 389.0L576.0 390.2L578.5 393.7L576.0 398.4L570.1 403.1L565.4 406.3L567.8 411.3L569.9 416.0L573.0 417.1L573.9 415.1L571.5 408.9L575.0 406.3L580.9 402.8L587.9 399.3L592.6 394.6L593.8 390.2L591.2 386.4L585.3 382.9L576.5 379.6L581.2 375.9L587.9 371.2L592.6 366.2L597.3 359.4L599.6 354.5z"/></g><rect x="523.500" y="342.500" width="81" height="81" fill="none" stroke="#4527a0" stroke-width="1.100" stroke-dasharray="3 2.200"/><rect x="449.500" y="432.500" width="233" height="27" fill="#f8f5f5" stroke="#cfcfcf" stroke-width="1"/><path d="M449.500 459.500v-27h233" fill="none" stroke="#8c8c8c" stroke-width="1"/><rect x="449.500" y="462.500" width="233" height="27" fill="#fff" stroke="#cfcfcf" stroke-width="1"/><path d="M449.500 489.500v-27h233" fill="none" stroke="#8c8c8c" stroke-width="1"/><g clip-path="url(#mapc)"><rect x="449" y="492" width="232" height="113" fill="url(#grid)"/><path d="M586 492L586 518 580 528 565 536 681 536 681 492z" fill="url(#grid2)"/><path d="M449 575l40 10 30-2 46-16 53-29 30-30 9-16 24 0 0 10-9 21-7 18-8 26-30 12-38 14-23 7-20 5H449z" fill="#f1e6d8"/><g opacity=".8"><rect x="588" y="494" width="9" height="6" fill="#f2c9c9"/><rect x="570" y="512" width="10" height="9" fill="#f2c9c9" transform="rotate(-30 575 516)"/><rect x="556" y="522" width="7" height="5" fill="#f2c9c9" transform="rotate(-30 559 524)"/><rect x="620" y="496" width="8" height="5" fill="#cfe8c8"/><rect x="500" y="546" width="5" height="3" fill="#cfe8c8" transform="rotate(-33 502 547)"/><rect x="487" y="500" width="6" height="4" fill="#f2eeb0" transform="rotate(-33 490 502)"/><rect x="530" y="508" width="8" height="5" fill="#d0cdc6" transform="rotate(-33 534 510)"/><rect x="545" y="500" width="8" height="5" fill="#d0cdc6" transform="rotate(-33 549 502)"/><rect x="596" y="514" width="8" height="6" fill="#d0cdc6"/><rect x="632" y="516" width="7" height="5" fill="#cfe8c8"/></g><path d="M500 580l65-40 40-18 15 4-55 34-60 26z" fill="#eef2d2"/><path d="M565 540l20-12 25-6 10 6-52 30z" fill="#f4f6dc"/><path d="M470 598l20-10 30-3 46-17 52-29 32-31 9-16h22v10l-9 20-8 19-8 26-30 12-38 14-23 7-30 6H470z" fill="#aad3df"/><path d="M650 492h31v14l-12 28-14 0z" fill="#aad3df"/><path d="M560 605l28-10 38-15 30-13 8-26 9-20 8-18v102z" fill="#efe6da"/><path d="M600 605l0-8 56-22 25 6v24z" fill="#f4ead8"/><path d="M451 492c-2 30 0 60 6 85 6 14 20 20 40 24" fill="none" stroke="#e892a2" stroke-width="4.500"/><path d="M449 500c1 30 2 55 8 78" fill="none" stroke="#d9a0c8" stroke-width="1" stroke-dasharray="2 2"/><path d="M560 604l28-10 38-15 30-13 8-26 9-19 8-18" fill="none" stroke="#e892a2" stroke-width="4"/><path d="M655 536c8-6 14-6 26 0" fill="none" stroke="#e892a2" stroke-width="3"/><path d="M479 577l10 9 29-3 47-16 53-29 26-27 14-19" fill="none" stroke="#f9c48b" stroke-width="3.600"/><path d="M565 567l9 30" fill="none" stroke="#f9c48b" stroke-width="2.500"/><path d="M618 537l40-1" fill="none" stroke="#bbb" stroke-width="2"/><path d="M600 600l50-18 31-2" fill="none" stroke="#f9d9a8" stroke-width="3"/><path d="M449 519l67-8 12-19M496 492l20 19 39 29" fill="none" stroke="#f3f4b4" stroke-width="4"/><path d="M585 504l59 7M583 523l46 11M585 504l-2 19M615 508l-6 21M644 511l-15 23" fill="none" stroke="#f3f4b4" stroke-width="4"/><path d="M671 540l8 30" fill="none" stroke="#f3f4b4" stroke-width="2.500"/><path d="M492 584l73-49 15-8 5-9 1-26" fill="none" stroke="#777" stroke-width="3"/><path d="M492 584l73-49 15-8 5-9 1-26" fill="none" stroke="#eee" stroke-width="1.200"/><path d="M660 492l21 12" fill="none" stroke="#555" stroke-width="2.500"/><path d="M500 597l60-22 50-28 40-30 20-25" fill="none" stroke="#9a7fd0" stroke-width=".9" stroke-dasharray="4 3 1 3"/><path d="M597 576c20-8 40-20 50-40s20-30 30-44" fill="none" stroke="#5566dd" stroke-width=".8" stroke-dasharray="1 2"/></g><g font-family="Liberation Sans, sans-serif" font-size="8.500"><text x="480" y="497" fill="#7a6a4a" font-size="8">13 m</text><text x="479" y="530" fill="#555" font-size="7.500" transform="rotate(-24 479 530)">ver Street</text><text x="453" y="494" fill="#555" font-size="7" transform="rotate(82 453 494)">Memorial D</text><text x="451" y="520" fill="#8a3a4a" font-size="7" transform="rotate(80 451 520)">Soldiers Field Roa</text><g fill="#8a7a45" font-style="italic" font-size="8.500"><text x="529" y="549" textLength="57">Massachusetts</text><text x="540" y="559" textLength="35">Institute</text><text x="531" y="569" textLength="48">of Technology</text></g><g fill="#6e8fc8" font-style="italic" font-size="8.500"><text x="617" y="548" textLength="30">Charles</text><text x="621" y="558" textLength="22">River</text><text x="488" y="594" font-size="7.500" textLength="42" transform="rotate(-3 488 594)">Charles River</text></g><g fill="#444" font-size="8.500"><text x="559" y="580" textLength="31">Harvard</text><text x="563" y="590" textLength="26">Bridge</text></g><text x="609" y="604.500" fill="#aaa" font-size="8">Back Bay</text></g><circle cx="520.300" cy="555.200" r="3.200" fill="#5ba6a6" stroke="#16343a" stroke-width="1"/><circle cx="563.800" cy="549" r="6.300" fill="#1cb5ee"/><path d="M563.800 541.700l1.600 2h-3.200zM563.800 556.300l1.600-2h-3.200zM556.500 549l2-1.600v3.200zM571.100 549l-2-1.600v3.200z" fill="#1cb5ee"/><circle cx="563.800" cy="549" r="4.300" fill="none" stroke="#fff" stroke-width=".9"/><rect x="457.500" y="523.500" width="20.500" height="64" rx="2.500" fill="#fff"/><path d="M457.500 544.600h20.500M457.500 566.300h20.500" stroke="#ccc" stroke-width=".8"/><rect x="463" y="533.500" width="7" height="5" fill="#8a8a8a"/><path d="M467.500 533.500v-2a2.300 2.300 0 0 1 4.600 0v1" fill="none" stroke="#9a9a9a" stroke-width="1.200"/><circle cx="467.700" cy="555" r="3" fill="none" stroke="#9a9a9a" stroke-width="1.300"/><path d="M467.700 549.500v3M467.700 557.500v3M462.200 555h3M470.200 555h3" stroke="#9a9a9a" stroke-width="1.600"/><path d="M464.600 575a3.800 3.800 0 1 1 1.200 4.300" fill="none" stroke="#9a9a9a" stroke-width="1.300"/><path d="M462.300 573.200l3.800.2-1.600 3z" fill="#9a9a9a"/><path d="M468.300 575v2.300l1.800 1" fill="none" stroke="#9a9a9a" stroke-width="1"/><circle cx="644" cy="527.800" r="15.300" fill="rgba(255,255,255,.82)" stroke="#9a9a9a" stroke-width="1"/><path d="M644 513.500l2.600 14.300h-5.200z" fill="#c8242a"/><path d="M644 543l2.600-15.200h-5.200z" fill="#222"/><circle cx="644" cy="527.800" r="1.100" fill="#fff"/><rect x="605.500" y="577.500" width="66" height="11.500" fill="rgba(255,255,255,.5)"/><path d="M605.500 577.500v11.500h66v-11.500" fill="none" stroke="#777" stroke-width="1.300"/><text x="610.500" y="587" font-family="Liberation Sans, sans-serif" font-size="9" fill="#333" textLength="19">1 km</text><rect x="467" y="594.500" width="214" height="10.500" fill="rgba(255,255,255,.75)"/><rect x="451" y="597" width="16" height="4" fill="#7a86b8" opacity=".8"/><path d="M449 599h20" stroke="#555" stroke-width="1"/><text x="471" y="603" font-family="Liberation Sans, sans-serif" font-size="9" fill="#333" textLength="205" lengthAdjust="spacingAndGlyphs"><tspan fill="#0078a8">Leaflet</tspan> | Map data © <tspan fill="#0078a8">OpenStreetMap</tspan> contributors</text><rect x="449" y="492" width="232" height="113" fill="none" stroke="#b0b0b0" stroke-width=".8"/><rect x="447" y="680" width="237" height="22" fill="#000"/><path d="M512 691.500l-2.200 2.500 2.200 2.500" fill="none" stroke="#ddd" stroke-width="1"/><rect x="557.700" y="691" width="13.300" height="5.600" rx="2.800" fill="#fff"/><path d="M538 724.300h58" stroke="#3a3a3a" stroke-width="1"/></svg>
<div class="t " id="t48" style="left:457.3px;top:268.5px;font-size:10.5px;color:#fff;transform:scaleX(0.9895)">Smart Track</div>
<div class="t " id="t49" style="left:654.5px;top:241.5px;font-size:8px;color:#fff;font-weight:bold;transform:scaleX(0.9771)">12:00</div>
<div class="abs" style="left:862px;top:468px;width:26px;height:25px;background:#eeeeee;border-radius:12.500px 0 0 12.500px"></div>
<svg class="abs" style="left:869px;top:474px" width="12" height="13" viewBox="0 0 12 13"><path d="M3.500 2L8.300 6.500 3.500 11" fill="none" stroke="#555" stroke-width="1.600"/></svg>
<div class="abs" style="left:881px;top:236px;width:6px;height:454px;background:rgba(160,160,160,.85);"></div>
<!-- s_comps -->
<div class="abs" style="left:915px;top:211px;width:167px;height:32px;background:#fff;border:1px solid #dcdcdc;border-radius:3px"></div>
<svg class="abs" style="left:898px;top:221px" width="12" height="12" viewBox="0 0 12 12"><circle cx="6" cy="6" r="4.700" fill="none" stroke="#b0b0b0" stroke-width="1"/><path d="M3.500 6h5" stroke="#b0b0b0" stroke-width="1"/></svg>
<svg class="abs" style="left:928.5px;top:220.5px" width="13" height="13" viewBox="0 0 24 24"><rect x="6" y="2.500" width="12" height="19" rx="2" fill="none" stroke="#4527a0" stroke-width="2.200"/><path d="M6 18h12" stroke="#4527a0" stroke-width="2.500"/></svg>
<div class="t " id="t50" style="left:951px;top:219.5px;font-size:13px;color:#4527a0;-webkit-text-stroke:.25px;transform:scaleX(0.8157)">Screen1</div>
<div class="abs" style="left:928px;top:253px;width:168px;height:32px;background:#fff;border:1px solid #dcdcdc;border-radius:3px"></div>
<svg class="abs" style="left:910px;top:263px" width="12" height="12" viewBox="0 0 12 12"><circle cx="6" cy="6" r="4.700" fill="none" stroke="#b0b0b0" stroke-width="1"/><path d="M3.500 6h5" stroke="#b0b0b0" stroke-width="1"/></svg>
<svg class="abs" style="left:941.8px;top:262.5px" width="13" height="13" viewBox="0 0 24 24"><rect x="7" y="2.500" width="10" height="19" rx="1" fill="none" stroke="#4527a0" stroke-width="2.200"/><path d="M7 9h10M7 15.300h10" stroke="#4527a0" stroke-width="2"/></svg>
<div class="t " id="t51" style="left:964px;top:261.5px;font-size:13px;color:#4527a0;-webkit-text-stroke:.25px;transform:scaleX(0.8620)">Vertical_Arrangement1</div>
<div class="abs" style="left:941px;top:294px;width:167px;height:32px;background:#fff;border:1px solid #dcdcdc;border-radius:3px"></div>
<svg class="abs" style="left:924px;top:304px" width="12" height="12" viewBox="0 0 12 12"><circle cx="6" cy="6" r="4.700" fill="none" stroke="#b0b0b0" stroke-width="1"/><path d="M3.500 6h5" stroke="#b0b0b0" stroke-width="1"/></svg>
<svg class="abs" style="left:954.5px;top:303.5px" width="13" height="13" viewBox="0 0 24 24"><rect x="2" y="8.500" width="20" height="7" rx="1" fill="none" stroke="#4527a0" stroke-width="2.200"/><path d="M8.700 9v6.500M15.300 9v6.500" stroke="#4527a0" stroke-width="2"/></svg>
<div class="t " id="t52" style="left:976.3px;top:302.5px;font-size:13px;color:#4527a0;-webkit-text-stroke:.25px;transform:scaleX(0.8880)">Horizontal_Arrangem...</div>
<div class="abs" style="left:952px;top:334px;width:167px;height:32px;background:#fff;border:1px solid #dcdcdc;border-radius:3px"></div>
<svg class="abs" style="left:965.3px;top:343.5px" width="13" height="13" viewBox="0 0 24 24"><path d="M5 4v16M2.500 6.500L5 4l2.500 2.500M2.500 17.500L5 20l2.500-2.500" fill="none" stroke="#4527a0" stroke-width="2"/><path d="M11 5.500h11M11 12h11M11 18.500h11" stroke="#4527a0" stroke-width="2"/></svg>
<div class="t " id="t53" style="left:987.3px;top:342.5px;font-size:13px;color:#4527a0;-webkit-text-stroke:.25px;transform:scaleX(0.8391)">Space1</div>
<div class="abs" style="left:952px;top:373px;width:167px;height:32px;background:#fff;border:1px solid #dcdcdc;border-radius:3px"></div>
<svg class="abs" style="left:965.3px;top:382.5px" width="13" height="13" viewBox="0 0 24 24"><rect x="3" y="4" width="5" height="5" fill="none" stroke="#4527a0" stroke-width="2"/><path d="M12 6.500h10M12 16.500h10" stroke="#4527a0" stroke-width="2.200"/><path d="M2.500 16.500l2.500 2.500 4.500-5" fill="none" stroke="#4527a0" stroke-width="2"/></svg>
<div class="t " id="t54" style="left:987.3px;top:381.5px;font-size:13px;color:#4527a0;-webkit-text-stroke:.25px;transform:scaleX(0.8233)">List_Picker1</div>
<div class="abs" style="left:952px;top:411px;width:167px;height:32px;background:#fff;border:1px solid #dcdcdc;border-radius:3px"></div>
<svg class="abs" style="left:965.3px;top:420.5px" width="13" height="13" viewBox="0 0 24 24"><path d="M14 7H3v10h11" fill="none" stroke="#4527a0" stroke-width="2"/><path d="M18 3v18M15 3h6M15 21h6" stroke="#4527a0" stroke-width="1.800" fill="none"/><path d="M20 7h2v10h-2" fill="none" stroke="#4527a0" stroke-width="2"/></svg>
<div class="t " id="t55" style="left:987.3px;top:419.5px;font-size:13px;color:#4527a0;-webkit-text-stroke:.25px;transform:scaleX(0.7858)">Text_Box1</div>
<div class="abs" style="left:941px;top:451px;width:167px;height:32px;background:#fff;border:1px solid #dcdcdc;border-radius:3px"></div>
<svg class="abs" style="left:924px;top:461px" width="12" height="12" viewBox="0 0 12 12"><circle cx="6" cy="6" r="4.700" fill="none" stroke="#b0b0b0" stroke-width="1"/><path d="M3.500 6h5" stroke="#b0b0b0" stroke-width="1"/></svg>
<svg class="abs" style="left:954.5px;top:460.5px" width="13" height="13" viewBox="0 0 24 24"><rect x="2" y="8.500" width="20" height="7" rx="1" fill="none" stroke="#4527a0" stroke-width="2.200"/><path d="M8.700 9v6.500M15.300 9v6.500" stroke="#4527a0" stroke-width="2"/></svg>
<div class="t " id="t56" style="left:976.3px;top:459.5px;font-size:13px;color:#4527a0;-webkit-text-stroke:.25px;transform:scaleX(0.8880)">Horizontal_Arrangem...</div>
<div class="abs" style="left:952px;top:491px;width:168px;height:32px;background:#d4cbef;border:1px solid #4527a0;border-radius:3px"></div>
<svg class="abs" style="left:965.3px;top:500.5px" width="13" height="13" viewBox="0 0 24 24"><rect x="3" y="3" width="18" height="18" rx="2" fill="#4527a0"/><path d="M6 17l3.500-4.500 2.500 3 3.500-4.500 4 6z" fill="#d4cbef"/></svg>
<div class="t " id="t57" style="left:987.3px;top:499.5px;font-size:13px;color:#4527a0;-webkit-text-stroke:.25px;transform:scaleX(0.8461)">Image1</div>
<div class="abs" style="left:939px;top:529px;width:168px;height:32px;background:#fff;border:1px solid #dcdcdc;border-radius:3px"></div>
<svg class="abs" style="left:952.5px;top:538.5px" width="13" height="13" viewBox="0 0 24 24"><path d="M14 7H3v10h11" fill="none" stroke="#4527a0" stroke-width="2"/><path d="M18 3v18M15 3h6M15 21h6" stroke="#4527a0" stroke-width="1.800" fill="none"/><path d="M20 7h2v10h-2" fill="none" stroke="#4527a0" stroke-width="2"/></svg>
<div class="t " id="t58" style="left:974.3px;top:537.5px;font-size:13px;color:#4527a0;-webkit-text-stroke:.25px;transform:scaleX(0.8171)">Text_Box2</div>
<div class="abs" style="left:939px;top:568px;width:168px;height:32px;background:#fff;border:1px solid #dcdcdc;border-radius:3px"></div>
<svg class="abs" style="left:952.5px;top:577.5px" width="13" height="13" viewBox="0 0 24 24"><path d="M14 7H3v10h11" fill="none" stroke="#4527a0" stroke-width="2"/><path d="M18 3v18M15 3h6M15 21h6" stroke="#4527a0" stroke-width="1.800" fill="none"/><path d="M20 7h2v10h-2" fill="none" stroke="#4527a0" stroke-width="2"/></svg>
<div class="t " id="t59" style="left:974.3px;top:576.5px;font-size:13px;color:#4527a0;-webkit-text-stroke:.25px;transform:scaleX(0.8171)">Text_Box3</div>
<div class="abs" style="left:941px;top:608px;width:167px;height:32px;background:#fff;border:1px solid #dcdcdc;border-radius:3px"></div>
<svg class="abs" style="left:924px;top:618px" width="12" height="12" viewBox="0 0 12 12"><circle cx="6" cy="6" r="4.700" fill="none" stroke="#b0b0b0" stroke-width="1"/><path d="M3.500 6h5" stroke="#b0b0b0" stroke-width="1"/></svg>
<svg class="abs" style="left:954.5px;top:617.5px" width="13" height="13" viewBox="0 0 24 24"><path d="M3 6l6-2 6 2 6-2v14l-6 2-6-2-6 2zM9 4v14M15 6v14" fill="none" stroke="#4527a0" stroke-width="2.200" stroke-linejoin="round"/><path d="M9 4l6 2v14l-6-2z" fill="#4527a0"/></svg>
<div class="t " id="t60" style="left:976.3px;top:616.5px;font-size:13px;color:#4527a0;-webkit-text-stroke:.25px;transform:scaleX(0.8607)">Map1</div>
<div class="abs" style="left:952px;top:648px;width:167px;height:32px;background:#fff;border:1px solid #dcdcdc;border-radius:3px"></div>
<svg class="abs" style="left:966.0px;top:657.5px" width="13" height="13" viewBox="0 0 24 24"><path d="M19 13a7.500 7.500 0 1 1-5-7" fill="none" stroke="#4527a0" stroke-width="2"/><path d="M18.500 2v7M15 5.500h7" stroke="#4527a0" stroke-width="2"/></svg>
<div class="t " id="t61" style="left:987.3px;top:656.5px;font-size:13px;color:#4527a0;-webkit-text-stroke:.25px;transform:scaleX(0.8649)">Circle1</div>
<div class="abs" style="left:926px;top:686px;width:168px;height:32px;background:#fff;border:1px solid #dcdcdc;border-radius:3px"></div>
<svg class="abs" style="left:940.0px;top:695.5px" width="13" height="13" viewBox="0 0 24 24"><circle cx="12" cy="13.500" r="7.500" fill="none" stroke="#4527a0" stroke-width="2"/><path d="M9 2.500h6M12 9v5" stroke="#4527a0" stroke-width="2"/><path d="M17.500 7l1.500-1.500" stroke="#4527a0" stroke-width="2"/></svg>
<div class="t " id="t62" style="left:961.6px;top:694.5px;font-size:13px;color:#4527a0;-webkit-text-stroke:.25px;transform:scaleX(0.8553)">Clock1</div>
<div class="abs" style="left:1122px;top:205px;width:5.5px;height:407px;background:#ababab;"></div>
<div class="abs" style="left:889px;top:718px;width:219px;height:5.5px;background:#b4b4b4;"></div>
<div class="abs" style="left:1103px;top:438px;width:24px;height:24px;background:rgba(238,238,238,.85);border-radius:12px"></div>
<svg class="abs" style="left:1109px;top:444px" width="12" height="12" viewBox="0 0 12 12"><path d="M4.500 2.500L8 6l-3.500 3.500" fill="none" stroke="#aaa" stroke-width="1.500"/></svg>
<div class="abs" style="left:840px;top:501px;width:70px;height:24px;background:rgba(94,94,94,.93);border-radius:3.500px"></div>
<div class="t " id="t63" style="left:846.3px;top:509px;font-size:8.5px;color:#fff;transform:scaleX(0.9498)">All Components</div>
<!-- s_props -->
<div class="t " id="t64" style="left:1145px;top:215.5px;font-size:11.5px;color:#4527a0;-webkit-text-stroke:.25px;transform:scaleX(0.9358)">Common properties</div>
<div class="abs" style="left:1129px;top:236.5px;width:1237px;height:1px;background:#d0d0d0;"></div>
<div class="abs" style="left:1143px;top:242px;width:12px;height:13px;background:#fff;border:1px solid #444;border-radius:2px"></div>
<div class="t " id="t65" style="left:1170px;top:243.5px;font-size:11.5px;color:#2f2f2f;-webkit-text-stroke:.25px;transform:scaleX(0.9320)">Clickable</div>
<div class="abs" style="left:1142px;top:273px;width:210px;height:34px;background:#fff;border:1px solid #5a5a5a;border-radius:4px"></div>
<div class="abs" style="left:1151px;top:272px;width:35.8px;height:3px;background:#fff;"></div>
<div class="t " id="t66" style="left:1154.5px;top:266px;font-size:10.5px;color:#2f2f2f;-webkit-text-stroke:.25px;transform:scaleX(0.8992)">Height</div>
<div class="abs" style="left:1287px;top:274px;width:1px;height:32px;background:#5a5a5a;"></div>
<div class="t " id="t67" style="left:1147px;top:284.5px;font-size:11.5px;color:#2f2f2f;-webkit-text-stroke:.25px;transform:scaleX(0.9348)">100px</div>
<svg class="abs" style="left:1296.6px;top:283.3px" width="14" height="14" viewBox="0 0 14 14"><path d="M1 4.500V2.500a1.500 1.500 0 0 1 1.500-1.500H4.500M9.500 1h2a1.500 1.500 0 0 1 1.500 1.500V4.500M13 9.500v2a1.500 1.500 0 0 1-1.500 1.500H9.500M4.500 13H2.500A1.500 1.500 0 0 1 1 11.500V9.500" fill="none" stroke="#2f2f2f" stroke-width="1.500"/><circle cx="7" cy="7" r="2.100" fill="none" stroke="#2f2f2f" stroke-width="1.500"/></svg>
<svg class="abs" style="left:1328px;top:283.3px" width="14" height="14" viewBox="0 0 14 14"><path d="M1 5V1h4M9 1h4v4M13 9v4H9M5 13H1V9" fill="none" stroke="#2f2f2f" stroke-width="1.600"/></svg>
<div class="abs" style="left:1142px;top:326px;width:210px;height:34px;background:#fff;border:1px solid #5a5a5a;border-radius:4px"></div>
<div class="abs" style="left:1151px;top:325px;width:33.0px;height:3px;background:#fff;"></div>
<div class="t " id="t68" style="left:1154.5px;top:319px;font-size:10.5px;color:#2f2f2f;-webkit-text-stroke:.25px;transform:scaleX(0.9127)">Width</div>
<div class="abs" style="left:1287px;top:327px;width:1px;height:32px;background:#5a5a5a;"></div>
<div class="t " id="t69" style="left:1147px;top:337.5px;font-size:11.5px;color:#2f2f2f;-webkit-text-stroke:.25px;transform:scaleX(0.9348)">100px</div>
<svg class="abs" style="left:1296.6px;top:336.3px" width="14" height="14" viewBox="0 0 14 14"><path d="M1 4.500V2.500a1.500 1.500 0 0 1 1.500-1.500H4.500M9.500 1h2a1.500 1.500 0 0 1 1.500 1.500V4.500M13 9.500v2a1.500 1.500 0 0 1-1.500 1.500H9.500M4.500 13H2.500A1.500 1.500 0 0 1 1 11.500V9.500" fill="none" stroke="#2f2f2f" stroke-width="1.500"/><circle cx="7" cy="7" r="2.100" fill="none" stroke="#2f2f2f" stroke-width="1.500"/></svg>
<svg class="abs" style="left:1328px;top:336.3px" width="14" height="14" viewBox="0 0 14 14"><path d="M1 5V1h4M9 1h4v4M13 9v4H9M5 13H1V9" fill="none" stroke="#2f2f2f" stroke-width="1.600"/></svg>
<div class="abs" style="left:1143px;top:379px;width:208px;height:32px;background:#fff;border:1px solid #5a5a5a;border-radius:4px"></div>
<div class="abs" style="left:1152px;top:378px;width:36.1px;height:3px;background:#fff;"></div>
<div class="t " id="t70" style="left:1155.5px;top:372px;font-size:10.5px;color:#2f2f2f;-webkit-text-stroke:.25px;transform:scaleX(0.8444)">Picture</div>
<div class="abs" style="left:1288px;top:380px;width:1px;height:30px;background:#5a5a5a;"></div>
<div class="t " id="t71" style="left:1151.2px;top:391px;font-size:11.5px;color:#2f2f2f;-webkit-text-stroke:.25px;transform:scaleX(0.9530)">boy-2858738_640.png</div>
<svg class="abs" style="left:1268.5px;top:393.5px" width="9" height="7" viewBox="0 0 9 7"><path d="M1.500 1.500l3 3 3-3" fill="none" stroke="#2f2f2f" stroke-width="1.200"/></svg>
<svg class="abs" style="left:1296px;top:388.5px" width="17" height="15" viewBox="0 0 24 20"><path d="M19 8.500A7 7 0 0 0 5.500 7 5.500 5.500 0 0 0 6 18h12.500a4.800 4.800 0 0 0 .5-9.500z" fill="none" stroke="#2f2f2f" stroke-width="2"/><path d="M12 16V9.500M8.800 12l3.200-3.200 3.200 3.200z" fill="#2f2f2f" stroke="#2f2f2f" stroke-width="1.200"/></svg>
<svg class="abs" style="left:1329.5px;top:389.5px" width="14" height="14" viewBox="0 0 14 14"><path d="M6.500 1.500H2.500a1 1 0 0 0-1 1v9a1 1 0 0 0 1 1h9a1 1 0 0 0 1-1V7.500" fill="none" stroke="#2f2f2f" stroke-width="1.500"/><path d="M8.500 1.500h4v4M12.500 1.500L6 8" fill="none" stroke="#2f2f2f" stroke-width="1.500"/></svg>
<div class="abs" style="left:1142px;top:430px;width:210px;height:34px;background:#fff;border:1px solid #5a5a5a;border-radius:4px"></div>
<div class="abs" style="left:1151px;top:429px;width:67.0px;height:3px;background:#fff;"></div>
<div class="t " id="t72" style="left:1154.5px;top:423px;font-size:10.5px;color:#2f2f2f;-webkit-text-stroke:.25px;transform:scaleX(0.8564)">Rotation Angle</div>
<div class="t " id="t73" style="left:1147px;top:441.5px;font-size:11.5px;color:#2f2f2f;-webkit-text-stroke:.25px;transform:scaleX(1.0312)">0.0</div>
<div class="abs" style="left:1143px;top:479.5px;width:12px;height:12px;background:#4527a0;border-radius:2px"></div>
<svg class="abs" style="left:1143px;top:479.5px" width="12" height="12" viewBox="0 0 12 12"><path d="M2.500 6.200l2.500 2.500 4.500-5" fill="none" stroke="#fff" stroke-width="1.500"/></svg>
<div class="t " id="t74" style="left:1170px;top:480px;font-size:11.5px;color:#2f2f2f;-webkit-text-stroke:.25px;transform:scaleX(0.9053)">Scale Picture To Fit</div>
<div class="abs" style="left:1143px;top:505px;width:12px;height:12px;background:#4527a0;border-radius:2px"></div>
<svg class="abs" style="left:1143px;top:505px" width="12" height="12" viewBox="0 0 12 12"><path d="M2.500 6.200l2.500 2.500 4.500-5" fill="none" stroke="#fff" stroke-width="1.500"/></svg>
<div class="t " id="t75" style="left:1170px;top:505.5px;font-size:11.5px;color:#2f2f2f;-webkit-text-stroke:.25px;transform:scaleX(0.9622)">Visible</div>
<!-- s_task -->
<div class="abs" style="left:0px;top:728px;width:1366px;height:40px;background:linear-gradient(#4a5157 0,#20262b 6%,#12171b 45%,#0a0d10 55%,#0d1114 100%);"></div>
<div class="abs" style="left:0px;top:768px;width:1366px;height:34px;background:#fff;"></div>
<div class="abs" style="left:8.5px;top:729.5px;width:37.5px;height:37.5px;background:radial-gradient(circle at 50% 92%,#4fd0f8 0,#219ee0 30%,#1c5fa8 58%,#153a72 80%,#0f2a56 100%);border-radius:50%;border:1.500px solid #8aa2ba"></div>
<div class="abs" style="left:12px;top:731.5px;width:30.5px;height:17px;background:linear-gradient(rgba(255,255,255,.42),rgba(255,255,255,.08));border-radius:50% 50% 45% 45%/70% 70% 30% 30%"></div>
<svg class="abs" style="left:15px;top:736px" width="25" height="25" viewBox="0 0 25 25"><path d="M3.500 3.500c3-1.600 5.500-1.400 8.500.4l-1.800 7.200c-3-1.800-5.500-2-8.500-.4z" fill="#f0582a"/><path d="M13.500 4.800c3 1.800 5.500 1.800 8.500.2l-1.800 7.200c-3 1.600-5.500 1.600-8.500-.2z" fill="#8cc63f"/><path d="M1.200 12.500c3-1.600 5.500-1.400 8.500.4l-1.800 7.200c-3-1.800-5.500-2-8.500-.4z" fill="#2aa9e0" transform="translate(.8 0)"/><path d="M11.200 13.800c3 1.800 5.500 1.800 8.500.2l-1.800 7.200c-3 1.600-5.500 1.600-8.500-.2z" fill="#fbb034"/></svg>
<div class="abs" style="left:60px;top:729px;width:58px;height:38px;background:linear-gradient(135deg,#767c82 0,#4a4f55 30%,#23272b 55%,#2e3338 100%);border:1px solid #9a9fa4;border-radius:3px"></div>
<svg class="abs" style="left:73px;top:734px" width="33" height="31" viewBox="0 0 33 31"><path d="M2 3h11l2 2.500h16V26H2z" fill="#e6c878"/><rect x="4" y="1.500" width="3.500" height="2.500" fill="#2e9a48"/><rect x="7.500" y="1.500" width="6" height="2.500" fill="#fff"/><rect x="12" y="4" width="3.500" height="2.500" fill="#cc3a2e"/><rect x="15.500" y="4" width="6" height="2.500" fill="#fff"/><rect x="20.500" y="6" width="3.500" height="2.500" fill="#2e8ae0"/><rect x="24" y="6" width="5" height="2.500" fill="#fff"/><path d="M1.500 8.500h30v19h-30z" fill="#f7e3a6"/><path d="M5 18.500c0-1.500 1-2 2-2h18c1.500 0 2 1 2 2V30h-6v-7H11v7H5z" fill="#6fb6ea"/><path d="M7 18.500h18v3H7z" fill="#a8d6f6"/></svg>
<svg class="abs" style="left:135px;top:732px" width="32" height="32" viewBox="0 0 32 32"><circle cx="16" cy="16" r="15" fill="#fbc116"/><path d="M16 16L3 8.500A15 15 0 0 1 29 8.500z" fill="#e33b2e"/><path d="M16 16L3 8.500A15 15 0 0 0 13 30.700z" fill="#2da94f"/><path d="M16 9.500h13a15 15 0 0 0-26-1l6.500 11z" fill="#e33b2e"/><path d="M9.500 19.500L3 8.500a15 15 0 0 0 10.500 22.300l6-10.500z" fill="#2da94f"/><circle cx="16" cy="16" r="6.800" fill="#fff"/><circle cx="16" cy="16" r="5.400" fill="#4a8af4"/></svg>
<div class="abs" style="left:184px;top:729px;width:54px;height:38px;background:linear-gradient(135deg,#767c82 0,#4a4f55 30%,#23272b 55%,#2e3338 100%);border:1px solid #9a9fa4;border-radius:3px"></div>
<div class="abs" style="left:194px;top:732px;width:32px;height:32px;background:#2a8df0;border-radius:2px"></div>
<div class="t " id="t76" style="left:197.5px;top:736px;font-size:26px;color:#fff;transform:scaleX(0.7784)">V</div>
<div class="t " id="t77" style="left:211.5px;top:735.5px;font-size:14.5px;color:#fff;transform:scaleX(1.2379)">n</div>
<div class="t " id="t78" style="left:211.5px;top:746.5px;font-size:14.5px;color:#fff;transform:scaleX(1.3793)">c</div>
<div class="abs" style="left:240px;top:729px;width:3px;height:38px;background:linear-gradient(#5d6369,#2a2f34);border:1px solid #7e848a;border-left:none;border-radius:0 3px 3px 0"></div>
<div class="abs" style="left:246px;top:729px;width:58px;height:38px;background:linear-gradient(135deg,#c9cccf 0,#9a9ea2 40%,#6c7074 60%,#8e9296 100%);border:1px solid #d8dadc;border-radius:3px"></div>
<svg class="abs" style="left:259px;top:732px" width="32" height="31" viewBox="0 0 32 30"><defs><radialGradient id="ffga" cx="70%" cy="15%" r="95%"><stop offset="0" stop-color="#fff36a"/><stop offset=".3" stop-color="#ffbd2e"/><stop offset=".55" stop-color="#ff7a1a"/><stop offset=".8" stop-color="#ff3d4f"/><stop offset="1" stop-color="#e0249a"/></radialGradient></defs><path d="M16 4.500c2-.5 3.500 0 5 1C21 3.500 21.500 1.500 23 0c.5 3 3 4.500 5 8 1.500 2.500 2.500 5.500 2 9-1 7-6.500 12.500-14 12.500S2 24 2 17c0-3 1-5.500 2-7 0-2 .5-4 1.500-5.500C6 6.500 7 8 8.500 8.500 10 6.500 13 5 16 4.500z" fill="url(#ffga)"/><circle cx="15" cy="16.500" r="6.800" fill="#7a3be0"/><path d="M8.500 14c2-2.500 5-3.500 7-2.500 2 .8 3.500.5 5-.5-1 2.500-3 3.500-5 3.500 2 1 2.500 3.500 1 5.500" fill="none" stroke="#ff8a1a" stroke-width="2.200"/><path d="M21.500 10c2 3 2 7-.5 10" fill="none" stroke="#ffbd2e" stroke-width="2"/></svg>
<div class="abs" style="left:308px;top:729px;width:58px;height:38px;background:linear-gradient(135deg,#767c82 0,#4a4f55 30%,#23272b 55%,#2e3338 100%);border:1px solid #9a9fa4;border-radius:3px"></div>
<div class="abs" style="left:322px;top:733px;width:30px;height:30px;background:#0f979d;border-radius:50%"></div>
<svg class="abs" style="left:326px;top:741px" width="22" height="14" viewBox="0 0 22 14"><path d="M11 7C9 3.500 7.500 2.500 5.500 2.500a4.500 4.500 0 0 0 0 9c2 0 3.500-1 5.500-4.500s3.500-4.500 5.500-4.500a4.500 4.500 0 0 1 0 9c-2 0-3.500-1-5.500-4.500z" fill="none" stroke="#fff" stroke-width="2.200"/></svg>
<div class="abs" style="left:370px;top:729px;width:51px;height:38px;background:linear-gradient(135deg,#767c82 0,#4a4f55 30%,#23272b 55%,#2e3338 100%);border:1px solid #9a9fa4;border-radius:3px"></div>
<div class="abs" style="left:421px;top:729px;width:4px;height:38px;background:linear-gradient(#5d6369,#2a2f34);border:1px solid #7e848a;border-left:none;border-radius:0 3px 3px 0"></div>
<div class="abs" style="left:379px;top:736px;width:30px;height:24px;background:#000;border:1px solid #bbb;border-top:3px solid #ccc"></div>
<div class="t " id="t79" style="left:383px;top:741px;font-size:9px;color:#fff;font-family:'Liberation Mono',monospace;font-weight:bold;transform:scaleX(1.0181)">C:\_</div>
<div class="abs" style="left:431px;top:729px;width:54px;height:38px;background:linear-gradient(135deg,#767c82 0,#4a4f55 30%,#23272b 55%,#2e3338 100%);border:1px solid #9a9fa4;border-radius:3px"></div>
<div class="abs" style="left:485px;top:729px;width:4px;height:38px;background:linear-gradient(#5d6369,#2a2f34);border:1px solid #7e848a;border-left:none;border-radius:0 3px 3px 0"></div>
<div class="abs" style="left:442px;top:736px;width:30px;height:25px;background:#f4f4f4;border:1px solid #bbb;border-top:3px solid #ddd"></div>
<div class="abs" style="left:445px;top:741px;width:13px;height:16px;background:linear-gradient(135deg,#3a78c8,#4fb070 60%,#3a78c8);"></div>
<div class="abs" style="left:461px;top:742px;width:6px;height:1px;background:#999;"></div>
<div class="abs" style="left:461px;top:746px;width:6px;height:1px;background:#999;"></div>
<div class="abs" style="left:461px;top:750px;width:6px;height:1px;background:#999;"></div>
<div class="abs" style="left:461px;top:754px;width:6px;height:1px;background:#999;"></div>
<div class="abs" style="left:468px;top:741px;width:2px;height:10px;background:#3aa050;"></div>
<div class="abs" style="left:494px;top:729px;width:58px;height:38px;background:linear-gradient(135deg,#767c82 0,#4a4f55 30%,#23272b 55%,#2e3338 100%);border:1px solid #9a9fa4;border-radius:3px"></div>
<svg class="abs" style="left:506px;top:731px" width="36" height="36" viewBox="0 0 36 36"><path d="M4 22c0-7 7-12 15-12 6 0 10 3 10 7 0 3-3 3-5 4s-1 4-4 6-16 3-16-5z" fill="#dbe9f4" stroke="#9ab" stroke-width=".8"/><circle cx="9" cy="20" r="2.300" fill="#d8362a"/><circle cx="14" cy="15" r="2.300" fill="#3aa04a"/><circle cx="21" cy="14" r="2.300" fill="#f0a020"/><circle cx="16" cy="24" r="2" fill="#333"/><path d="M22 33L31 8l2 1-9 25z" fill="#e89030"/><path d="M31 8l1-6 3 2-2 5z" fill="#c8a070"/></svg>
<svg class="abs" style="left:1155px;top:745px" width="9" height="6" viewBox="0 0 9 6"><path d="M4.500 .5L8.500 5.500H.5z" fill="#fff"/></svg>
<svg class="abs" style="left:1175px;top:739px" width="16" height="17" viewBox="0 0 16 17"><rect x="2" y="3" width="8" height="11" fill="none" stroke="#fff" stroke-width="1.500"/><path d="M4 1v3M8 1v3M10 6h4v7h-3M3 16h6" stroke="#fff" stroke-width="1.500" fill="none"/><rect x="4" y="6" width="4" height="6" fill="#fff"/></svg>
<svg class="abs" style="left:1199px;top:739px" width="16" height="17" viewBox="0 0 16 17"><path d="M2 6h3l4-4v13l-4-4H2z" fill="#fff"/><path d="M11 5.500c1.500 1.500 1.500 4.500 0 6M13 3.500c2.500 2.500 2.500 7.500 0 10" fill="none" stroke="#fff" stroke-width="1.200"/></svg>
<svg class="abs" style="left:1224px;top:741px" width="16" height="13" viewBox="0 0 16 13"><path d="M1 12v-1M4 12v-2M7 12V8M10 12V5M13 12V1" stroke="#fff" stroke-width="2"/></svg>
<svg class="abs" style="left:1248px;top:739px" width="16" height="17" viewBox="0 0 16 17"><path d="M2 1v15" stroke="#fff" stroke-width="1.500"/><path d="M3 2h6v2h5l-2 3 2 3H8V8H3z" fill="#fff"/></svg>
<div class="t " id="t80" style="left:1297px;top:735px;font-size:12.5px;color:#fff;transform:scaleX(0.8893)">16:11</div>
<div class="t " id="t81" style="left:1281.5px;top:752px;font-size:12.5px;color:#fff;transform:scaleX(0.9125)">26-11-2019</div>
<div class="abs" style="left:1353px;top:728px;width:13px;height:40px;background:linear-gradient(#6a7076,#2a2f34 50%,#14181c 52%,#2a2f34);border-left:1px solid #8a9096"></div>
</div></body></html>
